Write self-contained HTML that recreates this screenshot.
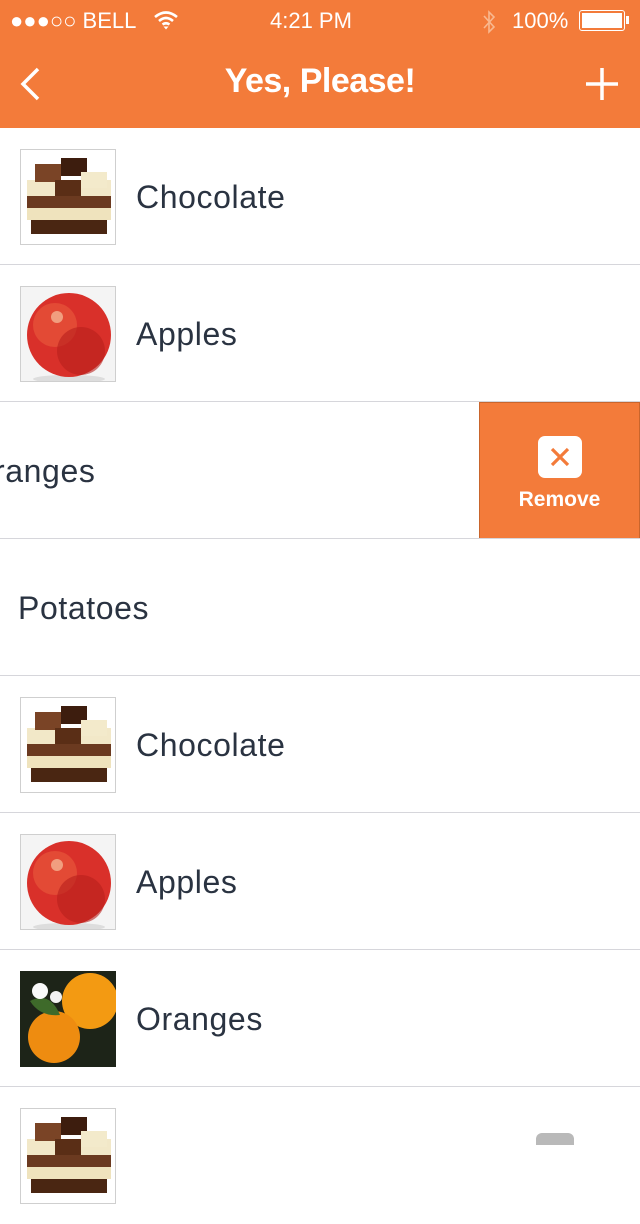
<!DOCTYPE html>
<html><head><meta charset="utf-8"><style>
*{margin:0;padding:0;box-sizing:border-box}
body{width:640px;height:1136px;overflow:hidden;background:#fff;font-family:"Liberation Sans",sans-serif;position:relative}
.hdr{position:absolute;left:0;top:0;width:640px;height:128px;background:#f37b3a;color:#fff}
.sb{position:absolute;top:8px;font-size:22px}
.title{position:absolute;top:62px;width:640px;text-align:center;font-size:34px;font-weight:bold;letter-spacing:-0.5px}
.row{position:absolute;left:0;width:640px;height:137px;border-bottom:1px solid #d6d6db}
.txt{position:absolute;left:136px;top:51px;font-size:32px;color:#2a3341;letter-spacing:0.6px}
.th{position:absolute;left:20px;top:21px;width:96px;height:96px;border:1px solid #cfcfcf;overflow:hidden;background:#fff}
</style></head><body>
<div class="hdr">
 <div class="sb" style="left:10px;">●●●○○ BELL</div>
 <svg style="position:absolute;left:153px;top:10px" width="26" height="20" viewBox="0 0 26 20"><path d="M2 7 Q13 -2 24 7 M6 11 Q13 5 20 11 M9.5 14.5 Q13 12 16.5 14.5" stroke="#fff" stroke-width="2.6" fill="none"/><path d="M10.5 16.5 L13 19.5 L15.5 16.5 Z" fill="#fff"/></svg>
 <div class="sb" style="left:270px;">4:21 PM</div>
 <svg style="position:absolute;left:482px;top:10px" width="14" height="24" viewBox="0 0 14 24"><path d="M2 6 L12 17 L7 22 L7 2 L12 7 L2 18" stroke="#f9b88f" stroke-width="1.6" fill="none"/></svg>
 <div class="sb" style="left:512px;">100%</div>
 <div style="position:absolute;left:579px;top:10px;width:46px;height:21px;border:1.5px solid #fff;border-radius:3px;padding:2px"><div style="background:#fff;width:100%;height:100%"></div></div>
 <div style="position:absolute;left:626px;top:16px;width:3px;height:8px;background:#fff"></div>
 <svg style="position:absolute;left:18px;top:66px" width="26" height="36" viewBox="0 0 26 36"><path d="M20 3 L5 18 L20 33" stroke="#fff" stroke-width="3.5" fill="none"/></svg>
 <div class="title">Yes, Please!</div>
 <svg style="position:absolute;left:584px;top:66px" width="36" height="36" viewBox="0 0 36 36"><path d="M18 2 V34 M2 18 H34" stroke="#fff" stroke-width="3.5"/></svg>
</div>

<svg width="0" height="0" style="position:absolute"><defs>
<g id="choc"><rect width="96" height="96" fill="#fff"/>
<rect x="6" y="30" width="84" height="16" fill="#f2e8c8"/><rect x="6" y="46" width="84" height="12" fill="#6b3a20"/><rect x="6" y="58" width="84" height="12" fill="#efe3bd"/><rect x="10" y="70" width="76" height="14" fill="#4a2612"/>
<rect x="14" y="14" width="26" height="18" fill="#7a4426"/><rect x="40" y="8" width="26" height="18" fill="#3d1d0e"/><rect x="60" y="22" width="26" height="16" fill="#f3eacb"/><rect x="34" y="30" width="26" height="16" fill="#5a2e16"/></g>
<g id="apple"><rect width="96" height="96" fill="#f4f4f4"/><ellipse cx="48" cy="92" rx="36" ry="4" fill="#ddd"/><circle cx="48" cy="48" r="42" fill="#d9302a"/><circle cx="34" cy="38" r="22" fill="#e7553a" opacity="0.7"/><circle cx="36" cy="30" r="6" fill="#f6c2a0" opacity="0.7"/><circle cx="60" cy="64" r="24" fill="#b81f1c" opacity="0.6"/></g>
<g id="orange"><rect width="96" height="96" fill="#1d2418"/><circle cx="70" cy="30" r="28" fill="#f39a12"/><circle cx="34" cy="66" r="26" fill="#ee8c10"/><path d="M10 30 Q30 20 40 44 Q20 46 10 30Z" fill="#3e6a2a"/><circle cx="20" cy="20" r="8" fill="#fafafa"/><circle cx="36" cy="26" r="6" fill="#f2f2f2"/></g>
</defs></svg>

<div class="row" style="top:128px"><div class="th"><svg width="96" height="96"><use href="#choc"/></svg></div><div class="txt">Chocolate</div></div>
<div class="row" style="top:265px"><div class="th"><svg width="96" height="96"><use href="#apple"/></svg></div><div class="txt">Apples</div></div>
<div class="row" style="top:402px;overflow:hidden"><div class="txt" style="left:-6px">ranges</div>
 <div style="position:absolute;left:479px;top:0;width:161px;height:137px;background:#f37b3a;border:1px solid #c9652c">
  <div style="position:absolute;left:58px;top:33px;width:44px;height:42px;background:#fff;border-radius:7px"></div>
  <svg style="position:absolute;left:69px;top:44px" width="22" height="20" viewBox="0 0 22 20"><path d="M3 2 L19 18 M19 2 L3 18" stroke="#f37b3a" stroke-width="3.2"/></svg>
  <div style="position:absolute;left:0;top:85px;width:159px;text-align:center;color:#fff;font-weight:bold;font-size:21px">Remove</div>
 </div></div>
<div class="row" style="top:539px"><div class="txt" style="left:18px">Potatoes</div></div>
<div class="row" style="top:676px"><div class="th"><svg width="96" height="96"><use href="#choc"/></svg></div><div class="txt">Chocolate</div></div>
<div class="row" style="top:813px"><div class="th"><svg width="96" height="96"><use href="#apple"/></svg></div><div class="txt">Apples</div></div>
<div class="row" style="top:950px"><div class="th" style="border:none"><svg width="96" height="96"><use href="#orange"/></svg></div><div class="txt">Oranges</div></div>
<div class="row" style="top:1087px;border:none"><div class="th"><svg width="96" height="96"><use href="#choc"/></svg></div>
 <div style="position:absolute;left:536px;top:46px;width:38px;height:12px;border-radius:6px 6px 0 0;background:#b9b9b9"></div></div>
</body></html>
